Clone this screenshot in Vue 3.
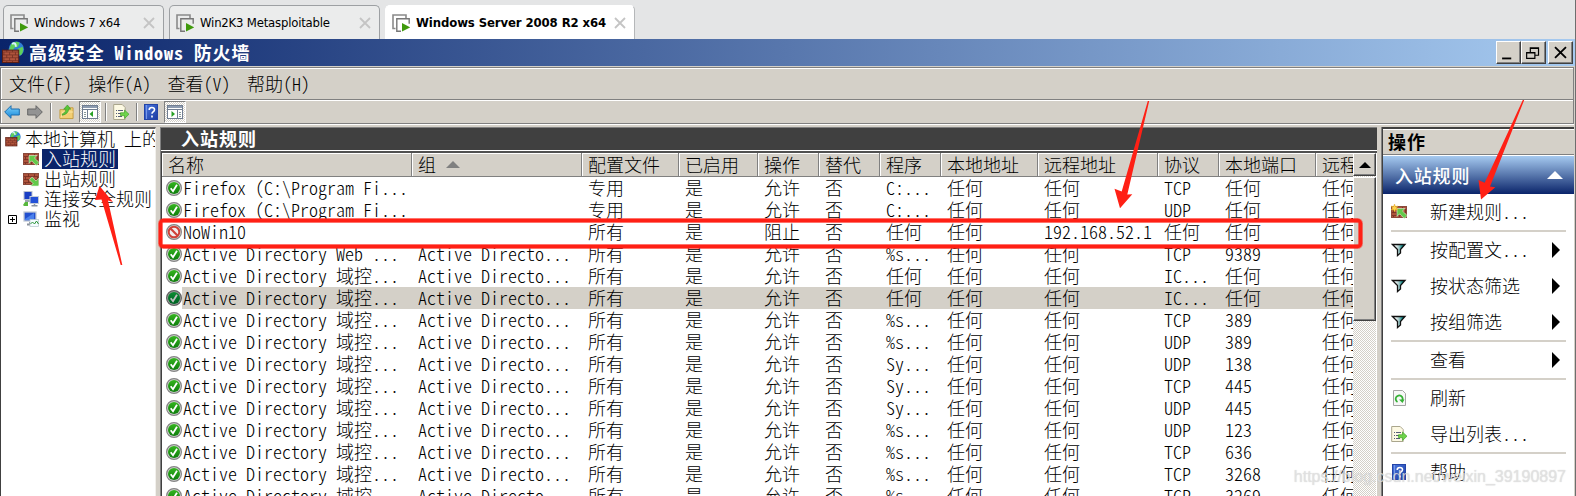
<script setup>
const tabs = [
  { title: 'Windows 7 x64', width: 161 },
  { title: 'Win2K3 Metasploitable', width: 211 },
  { title: 'Windows Server 2008 R2 x64', width: 250, active: true }
]
const menus = ['文件(F)', '操作(A)', '查看(V)', '帮助(H)']
const tree = [
  { text: '入站规则', icon: 'inbound', selected: true },
  { text: '出站规则', icon: 'outbound' },
  { text: '连接安全规则', icon: 'connection' },
  { text: '监视', icon: 'monitor', expandable: true }
]
const columns = ['名称', '组', '配置文件', '已启用', '操作', '替代', '程序', '本地地址', '远程地址', '协议', '本地端口', '远程']
const any = '任何'
const ff = 'Firefox (C:\\Program Fi...'
const ad = 'Active Directory 域控...'
const group = 'Active Directo...'
function rule(name, grp, profile, action, program, remote, protocol, port) {
  return [name, grp, profile, '是', action, '否', program, any, remote, protocol, port, any]
}
const adRule = (program, protocol, port) => rule(ad, group, '所有', '允许', program, any, protocol, port)
const rows = [
  rule(ff, '', '专用', '允许', 'C:...', any, 'TCP', any),
  rule(ff, '', '专用', '允许', 'C:...', any, 'UDP', any),
  rule('NoWin10', '', '所有', '阻止', any, '192.168.52.1', any, any),
  rule('Active Directory Web ...', group, '所有', '允许', '%s...', any, 'TCP', '9389'),
  adRule(any, 'IC...', any),
  adRule(any, 'IC...', any),
  adRule('%s...', 'TCP', '389'),
  adRule('%s...', 'UDP', '389'),
  adRule('Sy...', 'UDP', '138'),
  adRule('Sy...', 'TCP', '445'),
  adRule('Sy...', 'UDP', '445'),
  adRule('%s...', 'UDP', '123'),
  adRule('%s...', 'TCP', '636'),
  adRule('%s...', 'TCP', '3268'),
  adRule('%s...', 'TCP', '3269')
]
const actionGroups = [
  [{ text: '新建规则...', icon: 'newrule' }],
  [
    { text: '按配置文...', icon: 'filter', more: true },
    { text: '按状态筛选', icon: 'filter', more: true },
    { text: '按组筛选', icon: 'filter', more: true }
  ],
  [{ text: '查看', more: true }],
  [{ text: '刷新', icon: 'refresh' }, { text: '导出列表...', icon: 'export' }],
  [{ text: '帮助', icon: 'help' }]
]
</script>

<template>
  <div class="screen">
    <svg class="defs" width="0" height="0">
      <defs>
        <linearGradient id="gGreen" x1="0" y1="0" x2="0" y2="1"><stop offset="0" stop-color="#35b51f" /><stop offset="1" stop-color="#0d7d0c" /></linearGradient>
        <linearGradient id="gBlue" x1="0" y1="0" x2="0" y2="1"><stop offset="0" stop-color="#7fd3fb" /><stop offset="1" stop-color="#1585d8" /></linearGradient>
        <linearGradient id="gHelp" x1="0" y1="0" x2="1" y2="1"><stop offset="0" stop-color="#4a78e0" /><stop offset="1" stop-color="#1b3aa0" /></linearGradient>
        <linearGradient id="gFunnel" x1="0" y1="0" x2="1" y2="0"><stop offset=".2" stop-color="#fff" /><stop offset=".5" stop-color="#a9cccc" /><stop offset=".8" stop-color="#008080" /></linearGradient>
        <pattern id="bricks" width="6" height="6" patternUnits="userSpaceOnUse">
          <rect width="6" height="6" fill="#b0543c" /><path d="M0 2.6h6M0 5.6h6M2.5 0v2.6M5.5 3v2.6" stroke="#6e2c1f" stroke-width=".8" />
        </pattern>
      </defs>
      <symbol id="vm" viewBox="0 0 18 18">
        <path d="M3.500 14.500h-2.500v-13.500h13v3" fill="none" stroke="#8b8b8b" stroke-width="1.600" />
        <path d="M9 17.200h-4.200v-12.400h12.400v5" fill="none" stroke="#777" stroke-width="1.400" />
        <path d="M10 9l8.300 4.300-8.300 4.200z" fill="#3f9a0c" />
      </symbol>
      <symbol id="firewall" viewBox="0 0 24 24">
        <circle cx="15.500" cy="8.500" r="8" fill="#2f7fd6" />
        <path d="M10 3q5-4 9-1l-2 4-4 1-1 4-4-2zM17 8l5-2q2 5-2 9l-4-3z" fill="#5fd05a" />
        <path d="M11 3q4-2 4 3" stroke="#d9f2ff" stroke-width="2" fill="none" />
        <rect x="1" y="9.500" width="17" height="13" fill="url(#bricks)" stroke="#5b1d12" />
      </symbol>
      <symbol id="wall" viewBox="0 0 16 16"><rect x=".5" y="2.500" width="15" height="11" fill="url(#bricks)" stroke="#8a4a3c" /></symbol>
      <symbol id="inbound" viewBox="0 0 16 16">
        <use href="#wall" width="16" height="16" /><path d="M6 4.500h8l-2.500 2.500 4.500 4.500-2.700 3-4.700-4.700-2.600 2.600z" fill="#62c94a" stroke="#e3f5dc" stroke-width=".6" />
      </symbol>
      <symbol id="outbound" viewBox="0 0 16 16">
        <use href="#wall" width="16" height="16" /><path d="M15.700 15h-8l2.400-2.400-3.800-3.800 2.800-2.800 3.900 3.900 2.700-2.700z" fill="#62c94a" stroke="#e3f5dc" stroke-width=".6" />
      </symbol>
      <symbol id="newrule" viewBox="0 0 16 16">
        <use href="#inbound" width="16" height="16" /><path d="M3.500 0l1 2.500 2.500-.5-1.500 2 1.500 2-2.500-.3-1 2.300-1-2.300-2.500.3 1.500-2-1.500-2 2.500.5z" fill="#ffd34a" stroke="#d99a1c" stroke-width=".4" />
      </symbol>
      <symbol id="connection" viewBox="0 0 16 16">
        <rect x="1" y=".500" width="8" height="8" fill="#1a3fc4" stroke="#b9c2cf" /><path d="M2 10h6" stroke="#7f8896" stroke-width="1.500" />
        <rect x="7" y="5.500" width="8.500" height="7" fill="#2351d8" stroke="#c5cdd8" /><path d="M8.500 14.800h6M11.500 13v2" stroke="#8a93a0" stroke-width="1.500" />
        <path d="M0 14l2-3h3v4h-4z" fill="#58b83e" />
      </symbol>
      <symbol id="monitor" viewBox="0 0 16 16">
        <rect x="1" y="1" width="12" height="9" fill="#2350cf" stroke="#c2cad4" stroke-width="1.300" /><path d="M2 8l9-6v7H2z" fill="#4a80ec" />
        <path d="M4 13.500h6M7 11v2" stroke="#8b929c" stroke-width="2" />
        <rect x="7" y="8.500" width="8.500" height="7" fill="#f4fbff" stroke="#b5c4cc" stroke-width=".7" /><path d="M7.500 13l2-2 2 2 2-3 2 3" stroke="#299335" fill="none" />
      </symbol>
      <symbol id="allow" viewBox="0 0 16 16">
        <circle cx="8" cy="8" r="7.400" fill="#d7d7d7" stroke="#858585" stroke-width="1.200" /><circle cx="8" cy="8" r="6" fill="url(#gGreen)" />
        <path d="M4.700 8.200l2.300 3 4-6.500" stroke="#fff" stroke-width="1.800" fill="none" />
      </symbol>
      <symbol id="block" viewBox="0 0 16 16">
        <circle cx="8" cy="8" r="7.400" fill="#dedede" stroke="#858585" stroke-width="1.200" /><circle cx="8" cy="8" r="5.300" fill="#f1eeee" stroke="#cf4238" stroke-width="2" />
        <path d="M4.300 4.300l7.400 7.400" stroke="#cf4238" stroke-width="2.200" />
      </symbol>
      <symbol id="filter" viewBox="0 0 16 16"><path d="M1.500 2.500h12.500l-4.500 5v3.500l-3 2.500v-6z" fill="url(#gFunnel)" stroke="#111" stroke-width="1.300" /></symbol>
      <symbol id="refresh" viewBox="0 0 16 16">
        <path d="M2.500.500h9l3 3v12h-12z" fill="#f7f7f7" stroke="#a4a4a4" /><path d="M6.500 12a3.500 3.500 0 1 1 4.500-1" fill="none" stroke="#35b135" stroke-width="1.800" /><path d="M8 9.500h5.500l-2 3.500z" fill="#35b135" />
      </symbol>
      <symbol id="export" viewBox="0 0 16 16">
        <path d="M.700.500h8.500l3 3v12h-11.500z" fill="#fdf9e3" stroke="#aaa68d" /><path d="M3 6.500h1M5 6.500h5M3 9.500h1M5 9.500h3M3 12.500h1M5 12.500h4" stroke="#555d78" />
        <path d="M7.500 8.700h4v-2.700l4.500 4.200-4.500 4.300v-2.800h-4z" fill="#6ed44a" stroke="#379822" stroke-width=".6" />
      </symbol>
      <symbol id="help" viewBox="0 0 16 16">
        <rect x="1.500" y=".5" width="13" height="15" fill="url(#gHelp)" stroke="#2344a8" /><path d="M3.500 1v14" stroke="#7897e8" />
        <path d="M6.200 6q0-2.500 2.700-2.500t2.600 2.200q0 1.200-1.300 2-1.200.700-1.200 2.100M9 11.500v2" stroke="#fff" stroke-width="1.600" fill="none" />
      </symbol>
      <symbol id="folder" viewBox="0 0 16 16">
        <path d="M1 5.500h5l1-2h8v11.500h-14z" fill="#f3cf73" stroke="#c39a3e" /><path d="M2 14l2-6h11" stroke="#fbe7a8" fill="none" />
        <path d="M3.500 10q4-1 3.800-5h-2.300l4-4.500 3.500 4.500h-2.300q0 5-6.700 6.500z" fill="#58c838" stroke="#338d20" stroke-width=".6" />
      </symbol>
      <symbol id="paneLeft" viewBox="0 0 16 16">
        <rect x=".5" y="1.500" width="15" height="13" fill="#fff" stroke="#707d91" /><path d="M1 3h14" stroke="#8d9bb0" stroke-width="2" /><path d="M1 5.500h14M5.500 6v8.500" stroke="#707d91" />
        <path d="M2 8.500h2M2 10.500h2M2 12.500h2" stroke="#899" /><path d="M11 7v6l-3.500-3z" fill="#27a024" />
      </symbol>
      <symbol id="paneRight" viewBox="0 0 16 16">
        <rect x=".5" y="1.500" width="15" height="13" fill="#fff" stroke="#707d91" /><path d="M1 3h14" stroke="#8d9bb0" stroke-width="2" /><path d="M1 5.500h14M10.500 6v8.500" stroke="#707d91" />
        <path d="M12 8.500h2M12 10.500h2M12 12.500h2" stroke="#899" /><path d="M4.500 7v6l3.500-3z" fill="#27a024" />
      </symbol>
    </svg>

    <div class="tabs">
      <div v-for="t in tabs" :key="t.title" class="tab" :class="{ active: t.active }" :style="{ width: t.width + 'px' }">
        <svg class="vm"><use href="#vm" /></svg>
        <span class="tab-title">{{ t.title }}</span>
        <svg class="tab-x" viewBox="0 0 12 12"><path d="M1 1l10 10M11 1l-10 10" stroke="#c4c4c4" stroke-width="1.800" /></svg>
      </div>
    </div>

    <div class="window">
      <div class="titlebar">
        <svg class="app-icon"><use href="#firewall" /></svg>
        <span class="title">高级安全 Windows 防火墙</span>
        <div class="win-btns">
          <svg class="wbtn" viewBox="0 0 24 23"><path d="M5 18h10" stroke="#000" stroke-width="2" /></svg>
          <svg class="wbtn gap" viewBox="0 0 24 23"><path d="M8.500 11v-4.500h9v8h-4M8 7h10M4.500 11.500h9v6.500h-9zM4 12h10" fill="none" stroke="#000" stroke-width="1.300" /></svg>
          <svg class="wbtn" viewBox="0 0 24 23"><path d="M6 5.500l12 12M18 5.500l-12 12" stroke="#000" stroke-width="2" /></svg>
        </div>
      </div>
      <div class="menubar"><span v-for="m in menus" :key="m">{{ m }}</span></div>
      <div class="toolbar">
        <svg class="nav" viewBox="0 0 16 14"><path d="M.700 7l6.300-6.300v3.300h8.300v6h-8.300v3.300z" fill="url(#gBlue)" stroke="#1c6dae" /></svg>
        <svg class="nav fwd" viewBox="0 0 16 14"><path d="M15.300 7l-6.300-6.300v3.300h-8.300v6h8.300v3.300z" fill="#939393" stroke="#666" /></svg>
        <i class="sep"></i>
        <svg class="ic folder"><use href="#folder" /></svg>
        <span class="pressed"><svg class="ic"><use href="#paneLeft" /></svg></span>
        <i class="sep s2"></i>
        <svg class="ic"><use href="#export" /></svg>
        <i class="sep s3"></i>
        <svg class="ic"><use href="#help" /></svg>
        <span class="pressed p2"><svg class="ic"><use href="#paneRight" /></svg></span>
      </div>

      <div class="body">
        <div class="tree">
          <div class="node root"><svg class="ic"><use href="#firewall" /></svg><span class="label">本地计算机 上的</span></div>
          <div v-for="n in tree" :key="n.text" class="node">
            <span class="exp"><svg v-if="n.expandable" width="9" height="9"><path d="M.5.5h8v8h-8zM2 4.500h5M4.500 2v5" fill="none" stroke="#000" /></svg></span>
            <svg class="ic"><use :href="'#' + n.icon" /></svg><span class="label" :class="{ sel: n.selected }">{{ n.text }}</span>
          </div>
        </div>

        <div class="center">
          <div class="pane-title">入站规则</div>
          <div class="list">
            <div class="grid">
              <div class="row head">
                <div v-for="(c, i) in columns" :key="i" class="th">{{ c }}<svg v-if="i === 1" class="sort" viewBox="0 0 14 7"><path d="M0 7l7-7 7 7z" fill="#808080" /></svg></div>
              </div>
              <div v-for="(r, i) in rows" :key="i" class="row" :class="{ hl: i === 5 }">
                <div v-for="(c, j) in r" :key="j" class="td"><svg v-if="j === 0" class="ic"><use :href="i === 2 ? '#block' : '#allow'" /></svg><span>{{ c }}</span></div>
              </div>
            </div>
            <div class="scroll">
              <div class="sbtn"><svg width="12" height="6"><path d="M0 6l6-6 6 6z" /></svg></div>
              <div class="thumb"></div>
            </div>
          </div>
        </div>

        <div class="actions">
          <div class="act-head">操作</div>
          <div class="act-title"><span>入站规则</span><svg width="16" height="8"><path d="M0 8l8-8 8 8z" fill="#fff" /></svg></div>
          <div v-for="(g, gi) in actionGroups" :key="gi" class="act-group">
            <div v-for="a in g" :key="a.text" class="act">
              <span class="act-ic"><svg v-if="a.icon" class="ic"><use :href="'#' + a.icon" /></svg></span>
              <span class="act-text">{{ a.text }}</span>
              <svg v-if="a.more" class="more" width="8" height="16"><path d="M0 0l8 8-8 8z" /></svg>
            </div>
          </div>
        </div>
      </div>
    </div>

    <svg class="marks" viewBox="0 0 1576 496">
      <rect x="160.500" y="220.500" width="1200" height="26" rx="3" fill="none" stroke="#ff2015" stroke-opacity=".5" stroke-width="5" />
      <rect x="160.500" y="220.500" width="1200" height="26" rx="3" fill="none" stroke="#ff2015" stroke-width="3.400" />
      <g fill="#ff2015">
        <path d="M99.500 186L113 202l-5-1.500L122.300 265h-1.600L101.500 199.500 95 200z" />
        <path d="M1120 208.300L1114.500 188.700l7.200 2.800L1147.800 101h1.400L1127.300 194.500l5-.3z" />
        <path d="M1481 199.500L1478.500 180l6.200 2.800L1522.800 100h1.400L1490 186.500l5.300.8z" />
      </g>
    </svg>
    <div class="watermark">https://blog.csdn.net/weixin_39190897</div>
  </div>
</template>

<style>
body { overflow: hidden; }
</style>

<style scoped>
.screen { position: relative; width: 1576px; height: 496px; overflow: hidden; box-sizing: border-box; background: #e4e5e6; border-right: 1px solid #6e6e6e; font: 18px/22px "Noto Sans CJK SC", sans-serif; font-weight: 300; font-feature-settings: "hwid"; color: #000; white-space: pre; }
.screen * { box-sizing: border-box; }
svg { display: block; flex: none; }
.defs { position: absolute; }
.ic { width: 16px; height: 16px; }
.tabs { display: flex; gap: 5px; height: 39px; padding: 5px 0 0 3px; }
.tab { display: flex; align-items: center; height: 34px; padding: 0 8px 0 6px; border: 1px solid #9da0a3; border-bottom: 0; border-radius: 5px 5px 0 0; background: #ebecec; font: 13px "DejaVu Sans Condensed", "DejaVu Sans", sans-serif; font-stretch: condensed; font-feature-settings: normal; letter-spacing: -.2px; }
.tab.active { background: #fff; border-color: #fff #b5b7b9 #fff #fff; font-weight: bold; letter-spacing: -.1px; }
.vm { width: 18px; height: 18px; margin-right: 6px; }
.tab-x { width: 12px; height: 12px; margin-left: auto; }
.window { height: 457px; display: flex; flex-direction: column; background: #d4d0c8; }
.titlebar { display: flex; align-items: center; height: 27px; flex: none; padding: 0 2px 0 1px; background: linear-gradient(90deg, #0a246a, #a6caf0); color: #fff; }
.app-icon { width: 24px; height: 23px; margin-right: 4px; }
.title { font-weight: 600; letter-spacing: .9px; padding-bottom: 2px; }
.win-btns { display: flex; margin-left: auto; }
.wbtn { width: 25px; height: 23px; background: #d4d0c8; border: 1px solid; border-color: #fff #404040 #404040 #fff; box-shadow: inset -1px -1px #808080; }
.wbtn.gap { margin-right: 2px; }
.menubar { display: flex; align-items: center; gap: 16.300px; height: 33px; flex: none; margin: 1px 1px 0 0; padding: 0 0 2px 8px; border: 1px solid #808080; box-shadow: inset 1px 1px #fff; }
.toolbar { display: flex; align-items: center; height: 24px; flex: none; margin-right: 1px; padding-left: 3px; border: 1px solid #808080; border-top: 0; box-shadow: inset 1px 1px #fff, 0 1px #fff; }
.nav { width: 16px; height: 14px; }
.fwd { margin-left: 7px; }
.sep { width: 2px; height: 18px; margin: 0 7px 0 7px; background: #808080; border-right: 1px solid #fff; }
.folder { width: 15px; }
.pressed { display: grid; place-items: center; width: 22px; height: 22px; margin-left: 5px; border: 1px solid #808080; border-right-color: #fff; border-bottom-color: #fff; background: repeating-conic-gradient(#fff 0 25%, #d4d0c8 0 50%) 0 0 / 2px 2px; }
.s2 { margin: 0 6px 0 4px; }
.s3 { margin: 0 5px 0 7px; }
.body { display: flex; flex: 1; min-height: 0; padding-top: 3px; }
.tree { width: 156px; flex: none; overflow: hidden; background: #fff; border: solid #404040; border-width: 2px 0 0 1px; border-top-color: #606060; border-right: 1px solid #f2f0ec; }
.node { display: flex; align-items: center; height: 20px; padding-left: 7px; }
.exp { width: 15px; }
.label { height: 20px; line-height: 18px; padding: 0 2px; margin-left: 3px; flex: none; }
.root { padding-left: 4px; }
.root .label { margin-left: 0; padding-left: 4px; }
.sel { background: #0a246a; color: #fff; }
.center { display: flex; flex-direction: column; width: 1217px; margin-left: 4px; flex: none; border-left: 1px solid #808080; border-top: 1px solid #808080; }
.pane-title { height: 22px; flex: none; background: #404040; color: #fff; font-weight: 600; line-height: 20px; letter-spacing: 1px; padding-left: 20px; }
.list { display: flex; flex: 1; min-height: 0; margin-top: 1px; border-top: 2px solid #505050; border-left: 1px solid #404040; background: #fff; box-shadow: 0 -1px #fff; }
.grid { width: 1191px; flex: none; overflow: hidden; }
.row { display: grid; grid-template-columns: 250px 170px 97px 79px 61px 61px 61px 97px 120px 61px 97px 120px; width: 1274px; height: 22px; }
.row.head { height: 24px; background: #d4d0c8; border-bottom: 1px solid #404040; }
.th { display: flex; align-items: center; padding: 0 0 1px 6px; border: 1px solid #808080; border-width: 0 1px 1px 0; box-shadow: inset 1px 1px #fff, 1px 0 #404040; }
.sort { width: 14px; height: 7px; margin-left: 10px; }
.td { display: flex; align-items: center; padding-left: 6px; }
.td span { line-height: 20px; padding-bottom: 2px; }
.td:first-child { padding-left: 4px; }
.td:first-child span { padding-left: 1px; }
.hl { background: linear-gradient(90deg, #fff 20px, #d4d0c8 20px); }
.hl .ic { filter: brightness(.75) hue-rotate(20deg); }
.scroll { width: 23px; flex: none; background: repeating-conic-gradient(#fff 0 25%, #d4d0c8 0 50%) 0 0 / 2px 2px; }
.sbtn { display: grid; place-items: center; height: 23px; background: #d4d0c8; border: 1px solid; border-color: #fff #404040 #404040 #fff; box-shadow: inset -1px -1px #808080; }
.thumb { height: 144px; margin-top: 1px; background: #d4d0c8; border: 1px solid; border-color: #fff #404040 #404040 #fff; box-shadow: inset -1px -1px #808080; }
.actions { width: 192px; margin-left: 5px; flex: none; background: #fff; border-left: 1px solid #404040; border-top: 2px solid #404040; box-shadow: -1px 0 #808080; }
.act-head { height: 26px; padding-left: 5px; background: #d4d0c8; border-top: 1px solid #fff; border-bottom: 1px solid #808080; line-height: 22px; font-weight: 600; letter-spacing: 1px; }
.act-title { display: flex; align-items: center; justify-content: space-between; height: 39px; padding: 0 11px 0 12px; border-top: 1px solid #fff; background: linear-gradient(180deg, #a6caf0, #0a246a); color: #fff; font-weight: 500; letter-spacing: .8px; }
.act-group { margin: 0 8px; border-bottom: 2px solid #d4d0c8; }
.act-group:last-child { border: 0; }
.act { display: flex; align-items: center; height: 36px; }
.act-ic { width: 39px; flex: none; }
.act-text { padding-bottom: 2px; }
.more { margin: 0 6px 0 auto; }
.marks { position: absolute; inset: 0; width: 1576px; height: 496px; }
.watermark { position: absolute; right: 9px; bottom: 8px; font: 16px/22px "Liberation Sans", sans-serif; font-feature-settings: normal; color: rgba(228, 228, 228, .8); text-shadow: 0 0 1px rgba(120, 120, 120, .35); }
</style>
